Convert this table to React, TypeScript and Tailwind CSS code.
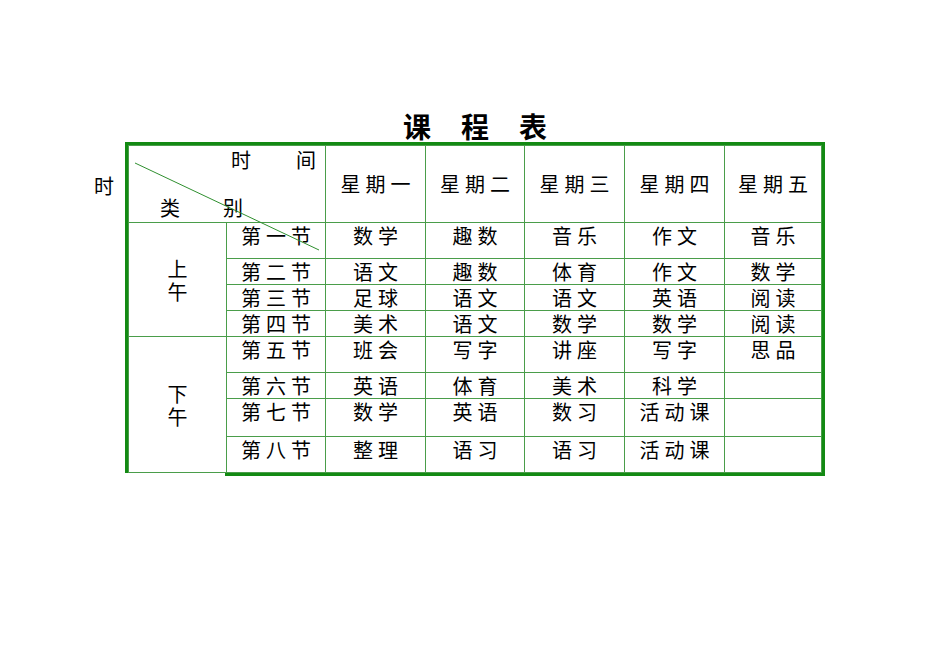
const days = ["星期一", "星期二", "星期三", "星期四", "星期五"];

const morning = [
  ["第一节", "数学", "趣数", "音乐", "作文", "音乐"],
  ["第二节", "语文", "趣数", "体育", "作文", "数学"],
  ["第三节", "足球", "语文", "语文", "英语", "阅读"],
  ["第四节", "美术", "语文", "数学", "数学", "阅读"],
];

const afternoon = [
  ["第五节", "班会", "写字", "讲座", "写字", "思品"],
  ["第六节", "英语", "体育", "美术", "科学", ""],
  ["第七节", "数学", "英语", "数习", "活动课", ""],
  ["第八节", "整理", "语习", "语习", "活动课", ""],
];

const line = "border-r border-b border-[#4a9d4a]";

function Cell({ text }: { text: string }) {
  return (
    <div className={`${line} flex justify-center items-start`}>
      <span className="leading-[26px] tracking-[5px] -mr-[5px]">{text}</span>
    </div>
  );
}

function Half({ label, rows }: { label: [string, string]; rows: string[][] }) {
  return (
    <>
      <div className={`${line} row-span-4 flex flex-col items-center justify-center leading-[23px]`}>
        <span>{label[0]}</span>
        <span>{label[1]}</span>
      </div>
      {rows.map((r) => r.map((t, i) => <Cell key={r[0] + i} text={t} />))}
    </>
  );
}

export default function App() {
  return (
    <div className="w-[950px] h-[672px] bg-white text-[20px] text-black font-['Noto_Sans_CJK_SC',sans-serif] pt-[110px]">
      <div className="ml-[125px] w-[700px] h-[32px] flex justify-center items-center">
        <h1 className="text-[28px] font-bold leading-[32px] tracking-[30px] -mr-[30px]">课程表</h1>
      </div>

      <div className="flex">
        <div className="w-[125px] pl-[94px] pt-[31px] leading-[26px]">时</div>

        <div className="flex flex-col">
          <div className="relative border-t-[3px] border-l-[3px] border-r-[3px] border-[#138a13]">
            <div className="grid grid-cols-[98px_99px_100px_99px_100px_100px_97px] grid-rows-[77px_36px_26px_26px_26px_36px_26px_38px_36px] border-l border-t border-[#4a9d4a]">
              <div className={`${line} col-span-2 flex flex-col justify-between leading-[26px]`}>
                <div className="flex justify-end gap-[45px] pr-[9px] pt-[1px]">
                  <span>时</span>
                  <span>间</span>
                </div>
                <div className="flex gap-[43px] pl-[31px] pb-[1px]">
                  <span>类</span>
                  <span>别</span>
                </div>
              </div>
              {days.map((d) => (
                <div key={d} className={`${line} flex items-center justify-center`}>
                  <span className="tracking-[5px] -mr-[5px]">{d}</span>
                </div>
              ))}
              <Half label={["上", "午"]} rows={morning} />
              <Half label={["下", "午"]} rows={afternoon} />
            </div>

            <svg className="absolute left-[4px] top-[15px] pointer-events-none" width="190" height="92">
              <line x1="3" y1="3" x2="187" y2="90" stroke="#2f8f2f" strokeWidth="1" />
            </svg>
          </div>
          <div className="ml-[100px] w-[600px] h-[3px] bg-[#138a13]" />
        </div>
      </div>
    </div>
  );
}
